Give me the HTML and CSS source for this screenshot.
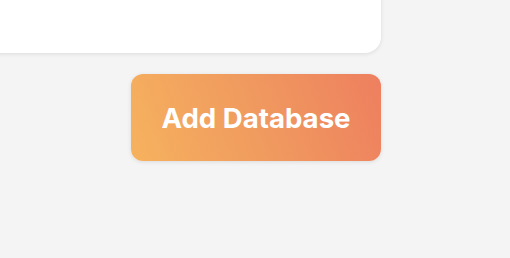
FILE: index.html
```html
<!DOCTYPE html>
<html>
<head>
<meta charset="utf-8">
<link rel="stylesheet" href="styles.css">
</head>
<body>
<div class="page">
  <div class="card"></div>
  <button class="add-btn">Add Database</button>
</div>
</body>
</html>
```
FILE: styles.css
```css
html, body {
  margin: 0;
  padding: 0;
  background: #f4f4f4;
  width: 510px;
  height: 258px;
  overflow: hidden;
}
.page {
  display: flex;
  flex-direction: column;
  align-items: flex-end;
  padding-right: 129px;
  font-family: Inter, "Noto Sans", sans-serif;
}
.card {
  width: 420px;
  height: 153px;
  margin-top: -100px;
  background: #ffffff;
  border-radius: 16px;
  box-shadow: 0 1px 4px rgba(0,0,0,0.10);
}
.add-btn {
  margin-top: 21px;
  width: 250px;
  height: 87px;
  border: none;
  border-radius: 12px;
  background: linear-gradient(70deg, #f6b25e 0%, #f09a5f 50%, #ee7f5f 100%);
  color: #ffffff;
  font-family: Inter, "Noto Sans", sans-serif;
  font-weight: 700;
  font-size: 27.6px;
  box-shadow: 0 1px 4px rgba(0,0,0,0.10);
  padding: 0;
}
```
